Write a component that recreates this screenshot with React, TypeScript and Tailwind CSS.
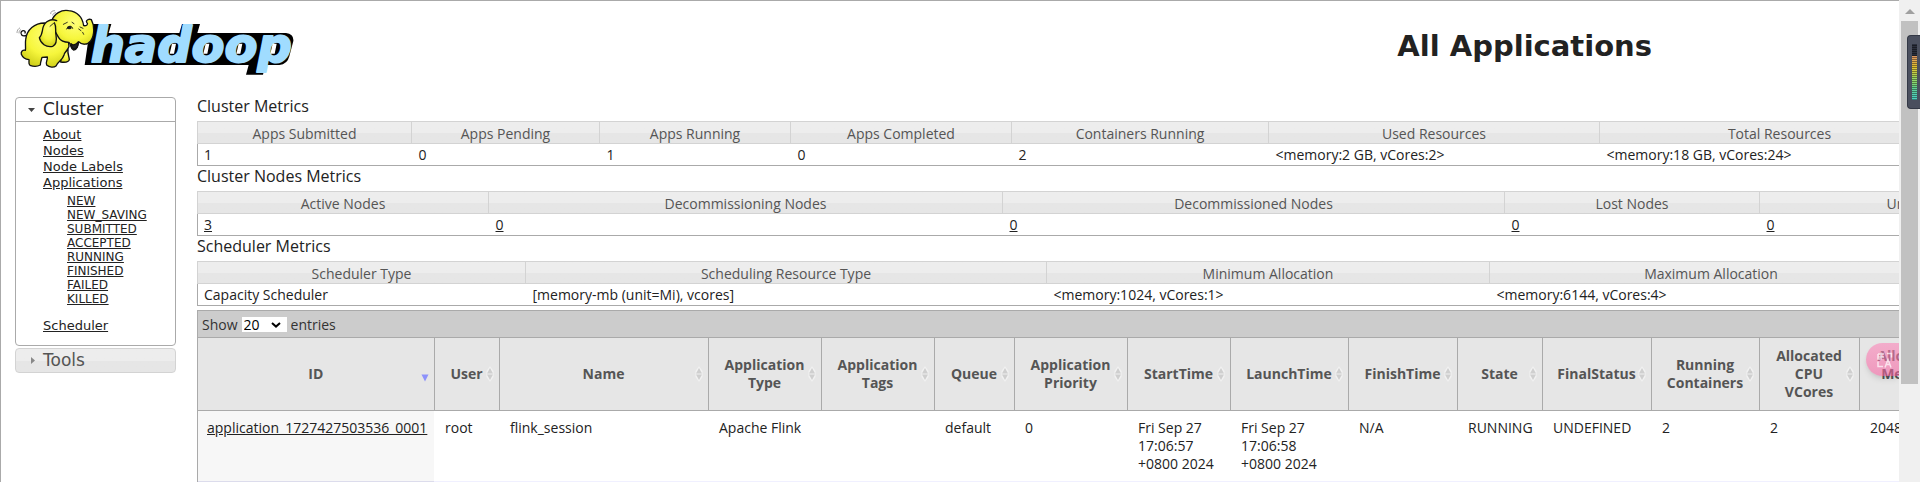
import React from "react";

type Metric = { head: string; value: string; width?: string; link?: boolean };

const clusterMetrics: Metric[] = [
  { head: "Apps Submitted", value: "1", width: "w-[214px]" },
  { head: "Apps Pending", value: "0", width: "w-[188px]" },
  { head: "Apps Running", value: "1", width: "w-[191px]" },
  { head: "Apps Completed", value: "0", width: "w-[221px]" },
  { head: "Containers Running", value: "2", width: "w-[257px]" },
  { head: "Used Resources", value: "<memory:2 GB, vCores:2>", width: "w-[331px]" },
  { head: "Total Resources", value: "<memory:18 GB, vCores:24>" },
];

const nodeMetrics: Metric[] = [
  { head: "Active Nodes", value: "3", width: "w-[291px]", link: true },
  { head: "Decommissioning Nodes", value: "0", width: "w-[514px]", link: true },
  { head: "Decommissioned Nodes", value: "0", width: "w-[502px]", link: true },
  { head: "Lost Nodes", value: "0", width: "w-[255px]", link: true },
  { head: "Unhealthy Nodes", value: "0", link: true },
];

const schedulerMetrics: Metric[] = [
  { head: "Scheduler Type", value: "Capacity Scheduler", width: "w-[328px]" },
  { head: "Scheduling Resource Type", value: "[memory-mb (unit=Mi), vcores]", width: "w-[521px]" },
  { head: "Minimum Allocation", value: "<memory:1024, vCores:1>", width: "w-[443px]" },
  { head: "Maximum Allocation", value: "<memory:6144, vCores:4>" },
];

const appColumns: Metric[] = [
  { head: "ID", value: "application_1727427503536_0001", width: "w-[236px]", link: true },
  { head: "User", value: "root", width: "w-[65px]" },
  { head: "Name", value: "flink_session", width: "w-[209px]" },
  { head: "Application Type", value: "Apache Flink", width: "w-[113px]" },
  { head: "Application Tags", value: "", width: "w-[113px]" },
  { head: "Queue", value: "default", width: "w-[80px]" },
  { head: "Application Priority", value: "0", width: "w-[113px]" },
  { head: "StartTime", value: "Fri Sep 27\n17:06:57\n+0800 2024", width: "w-[103px]" },
  { head: "LaunchTime", value: "Fri Sep 27\n17:06:58\n+0800 2024", width: "w-[118px]" },
  { head: "FinishTime", value: "N/A", width: "w-[109px]" },
  { head: "State", value: "RUNNING", width: "w-[85px]" },
  { head: "FinalStatus", value: "UNDEFINED", width: "w-[109px]" },
  { head: "Running Containers", value: "2", width: "w-[108px]" },
  { head: "Allocated CPU VCores", value: "2", width: "w-[100px]" },
  { head: "Allocated Memory MB", value: "2048" },
];

const appStates = ["NEW", "NEW_SAVING", "SUBMITTED", "ACCEPTED", "RUNNING", "FINISHED", "FAILED", "KILLED"];

function MetricsTable({ title, columns, minWidth }: { title: string; columns: Metric[]; minWidth: string }) {
  return (
    <section>
      <h2 className="h-[25px] text-base leading-[20px]">{title}</h2>
      <table aria-label={title} className={`w-full table-fixed border-collapse border border-[#aaa] text-sm leading-[18px] ${minWidth}`}>
        <colgroup>
          {columns.map((c) => (
            <col key={c.head} className={c.width} />
          ))}
        </colgroup>
        <thead>
          <tr className="h-[22px] bg-linear-to-b from-[#ededed] from-50% to-[#e6e6e6] to-50%">
            {columns.map((c) => (
              <th key={c.head} className="border border-[#d3d3d3] px-0 pt-[2px] pb-0 font-normal whitespace-nowrap text-[#555]">
                {c.head}
              </th>
            ))}
          </tr>
        </thead>
        <tbody>
          <tr className="h-[22px]">
            {columns.map((c) => (
              <td key={c.head} className="pt-px pr-0 pb-0 pl-[7px] whitespace-nowrap first:pl-[6px]">
                {c.link ? <a href="#nodes" className="underline">{c.value}</a> : c.value}
              </td>
            ))}
          </tr>
        </tbody>
      </table>
    </section>
  );
}

function SortBoth() {
  return (
    <svg aria-hidden="true" viewBox="0 0 8 16" className="absolute top-1/2 right-[5px] h-4 w-2 -translate-y-1/2">
      <path d="M4 0 7.500 5v6L4 16 .5 11V5z" fill="#f1f1f1" />
      <path d="M4 2 7 7.500H1zM4 14 7 8.500H1z" fill="#cfcfcf" />
    </svg>
  );
}

function SortDesc() {
  return (
    <svg aria-hidden="true" viewBox="0 0 8 16" className="absolute top-1/2 right-[5px] h-4 w-2 -translate-y-1/2">
      <path d="M.5 8.500h7L4 15.500z" fill="#8d92fb" />
    </svg>
  );
}

function ApplicationsTable() {
  return (
    <section className="mt-1 min-w-[1766px] border border-[#aaa]">
      <div className="flex h-[26px] items-center gap-1 bg-[#ccc] pt-px pl-1 text-sm text-[#333]">
        <label htmlFor="page-size">Show</label>
        <div className="relative">
          <select id="page-size" defaultValue="20" className="block h-[15px] w-[45px] appearance-none bg-white pl-[2px] text-sm leading-[15px] text-black">
            <option>20</option>
            <option>50</option>
            <option>100</option>
          </select>
          <svg aria-hidden="true" viewBox="0 0 10 6" className="pointer-events-none absolute top-[5px] right-[6px] h-[6px] w-[10px]">
            <path d="m1 1 4 3.600L9 1" fill="none" stroke="#000" strokeWidth="2" />
          </svg>
        </div>
        <span>entries</span>
      </div>
      <table aria-label="Applications" className="w-full table-fixed border-collapse text-sm leading-[18px]">
        <colgroup>
          {appColumns.map((c) => (
            <col key={c.head} className={c.width} />
          ))}
        </colgroup>
        <thead>
          <tr className="h-[73px] bg-[#e6e6e6] text-[#555]">
            {appColumns.map((c, i) => (
              <th key={c.head} className="relative border-y border-r border-[#aaa] px-3 py-0 font-bold">
                {c.head}
                {i === 0 ? <SortDesc /> : <SortBoth />}
              </th>
            ))}
          </tr>
        </thead>
        <tbody>
          <tr className="h-[70px] align-top">
            {appColumns.map((c) => (
              <td key={c.head} className="py-2 pr-0 pl-[11px] whitespace-pre-line first:bg-[#f7f7f7] first:pl-[9px]">
                {c.link ? <a href="#application" className="underline">{c.value}</a> : c.value}
              </td>
            ))}
          </tr>
          <tr className="h-[70px] bg-[#f0f0ff]">
            {appColumns.map((c) => (
              <td key={c.head} className="first:bg-[#dcdcec]" />
            ))}
          </tr>
        </tbody>
      </table>
    </section>
  );
}

function Logo() {
  return (
    <svg role="img" aria-label="hadoop" viewBox="45 20 840 210" className="mt-[6px] ml-[14px] h-[70px] w-[280px] shrink-0">
      <defs>
        <radialGradient id="hide" cx="0.55" cy="0.3" r="0.7">
          <stop offset="0" stopColor="#ffff7a" />
          <stop offset="0.6" stopColor="#f6f63c" />
          <stop offset="1" stopColor="#d2d21c" />
        </radialGradient>
      </defs>
      <path d="M272 71H334L326 98H538L546 71H600L592 98H858Q882 101 880 122L868 168Q862 192 838 194H796L789 223H738L746 194H254z" fill="#000" />
      <text
        x="272"
        y="186"
        fontFamily="'DejaVu Sans', sans-serif"
        fontWeight="bold"
        fontStyle="italic"
        fontSize="144"
        fill="#a0dcff"
        stroke="#a0dcff"
        strokeWidth="6"
        strokeLinejoin="round"
      >
        hadoop
      </text>
      <path d="M516 130h12l-6 30h-13zM617 130h11l-6 30h-12zM716 130h11l-6 30h-12zM818 130h12l-6 30h-13z" fill="#fff" />
      <g fill="url(#hide)" stroke="#111" strokeWidth="4" strokeLinejoin="round" strokeLinecap="round">
        <path d="M186 160 204 148C202 160 208 170 208 178 206 186 196 187 182 185z" />
        <path d="M79 105C66 110 60 101 64 94 70 88 78 92 75 98" fill="none" />
        <path d="M134 68C104 68 80 88 77 118 75 132 78 142 76 150 68 148 62 154 64 162 68 172 78 177 87 178 88 184 84 190 90 195 100 199 112 199 121 194 121 186 124 178 126 171L142 170C144 178 136 184 140 194 148 202 162 202 168 197 172 184 188 180 192 164 194 154 204 150 207 138L200 80z" />
        <path d="M155 62C162 40 184 27 206 31 230 34 247 50 251 76 262 78 265 70 260 66 257 59 267 55 274 58 284 76 284 106 272 122 262 135 246 134 236 124 234 136 232 148 221 149 211 146 214 134 207 126 196 126 182 122 176 112L160 84z" />
        <path d="M170 61C154 54 134 62 129 82 126 94 127 104 118 112 122 130 138 142 158 138 172 132 170 116 168 104 165 90 170 80 164 70" />
        <path d="M213 130C219 136 228 134 234 125 235 140 228 147 220 145 213 143 216 136 213 130z" fill="#222" />
        <path d="M236 86 243 91M240 80 249 84M248 96 251 102" strokeWidth="2.500" fill="none" />
        <path d="M190 72 202 66M222 70 216 66M150 78 164 66" strokeWidth="2.500" fill="none" />
        <ellipse cx="208" cy="82" rx="7" ry="5" fill="#222" stroke="none" />
        <path d="M200 86C206 74 216 76 218 84" fill="none" strokeWidth="3" />
        <path d="M152 40C152 34 156 31 164 31M158 44C159 40 162 38 167 37M51 97C51 90 54 86 59 83M57 98C57 92 59 90 62 88" fill="none" stroke="#777" strokeWidth="2" />
      </g>
    </svg>
  );
}

function Sidebar() {
  return (
    <nav className="flex w-[161px] shrink-0 flex-col gap-[2px] font-['DejaVu_Sans',sans-serif]">
      <div className="rounded-[4px] border border-[#aaa]">
        <button type="button" className="flex h-6 w-full items-center gap-2 border-b border-[#aaa] pl-3 text-[17px] leading-none">
          <svg aria-hidden="true" viewBox="0 0 7 4" className="h-1 w-[7px]"><path d="M0 0h7L3.500 4z" fill="#444" /></svg>
          Cluster
        </button>
        <ul className="pt-[5px] pb-[11px] pl-[27px] text-[13px] leading-4 text-[#222]">
          {["About", "Nodes", "Node Labels"].map((t) => (
            <li key={t}><a href="#cluster" className="underline">{t}</a></li>
          ))}
          <li>
            <a href="#apps" className="underline">Applications</a>
            <ul className="pt-[3px] pb-3 pl-6 text-xs">
              {appStates.map((s) => (
                <li key={s} className="h-[14px] leading-[14px]"><a href="#state" className="underline">{s}</a></li>
              ))}
            </ul>
          </li>
          <li><a href="#scheduler" className="underline">Scheduler</a></li>
        </ul>
      </div>
      <button type="button" className="flex h-[25px] w-full items-center gap-2 rounded-[4px] border border-[#d3d3d3] bg-linear-to-b from-[#ededed] from-50% to-[#e6e6e6] to-50% pl-[15px] text-[17px] leading-none text-[#555]">
        <svg aria-hidden="true" viewBox="0 0 4 7" className="h-[7px] w-1"><path d="M0 0v7l4-3.500z" fill="#888" /></svg>
        Tools
      </button>
    </nav>
  );
}

const meterBars = [
  "#2b2f3d", "#2b2f3d", "#2b2f3d", "#2b2f3d", "#2b2f3d", "#2b2f3d",
  "#e09a60", "#e0a058", "#e0a850", "#e0b044", "#e0b83a", "#e0c030", "#dcc83c", "#d0cc40",
  "#c4d048", "#b4d050", "#a4d458", "#98d868", "#90d86c", "#88d870", "#78d47c", "#68d088",
  "#60d098", "#5cd0a0", "#58d0a8", "#54d0b4", "#50d0b8", "#50d0c0",
];

function ScrollRail() {
  return (
    <div className="relative flex w-[21px] shrink-0 flex-col items-center bg-[#f0f0f0]">
      <button type="button" aria-label="Scroll up" className="flex h-[21px] w-full items-center justify-center pt-[2px]">
        <svg aria-hidden="true" viewBox="0 0 10 5" className="h-[5px] w-[10px]"><path d="M0 5h10L5 0z" fill="#a0a0a0" /></svg>
      </button>
      <div className="h-[363px] w-[17px] bg-[#c1c1c1]" />
      <div className="absolute top-[35px] right-0 flex h-[74px] w-[13px] flex-col rounded-l-[4px] border border-r-0 border-[#333845] bg-[#4a4f5e] pt-2 pl-1">
        {meterBars.map((c, i) => (
          <i key={i} className="block h-[2px] w-[5px] shrink-0 border-b border-black/40" style={{ backgroundColor: c }} />
        ))}
      </div>
    </div>
  );
}

function TranslateBadge() {
  return (
    <button type="button" aria-label="Translate" className="absolute top-[342px] right-0 flex h-[33px] w-[33px] items-center rounded-l-full bg-linear-to-b from-[#fb86b9]/60 to-[#f5589b]/55 pl-[11px] shadow-md">
      <svg aria-hidden="true" viewBox="0 0 16 16" className="h-4 w-4 opacity-70" fill="none" stroke="#fff" strokeWidth="1.500">
        <path d="M1 2h6M1 5h6M4 .5v7M1 2v5h2M10 1.500h4.500v4M1 9.500v5h5M8 15.500l3-8 3 8M9 12.500h4" />
      </svg>
    </button>
  );
}

export default function App() {
  return (
    <div className="flex h-screen overflow-hidden bg-white font-['Open_Sans',sans-serif] text-[#222]">
      <main className="relative min-w-0 flex-1 overflow-hidden border-t border-l border-[#aaa]">
        <header className="flex h-[96px] items-start justify-between">
          <Logo />
          <h1 className="mt-[27px] mr-[247px] font-['DejaVu_Sans',sans-serif] text-[29px] leading-9 font-bold whitespace-nowrap">All Applications</h1>
        </header>
        <div className="flex gap-[21px] pl-[14px]">
          <Sidebar />
          <div className="-mt-px min-w-0 flex-1">
            <MetricsTable title="Cluster Metrics" columns={clusterMetrics} minWidth="min-w-[1763px]" />
            <MetricsTable title="Cluster Nodes Metrics" columns={nodeMetrics} minWidth="min-w-[1930px]" />
            <MetricsTable title="Scheduler Metrics" columns={schedulerMetrics} minWidth="min-w-[1736px]" />
            <ApplicationsTable />
          </div>
        </div>
        <TranslateBadge />
      </main>
      <ScrollRail />
    </div>
  );
}
